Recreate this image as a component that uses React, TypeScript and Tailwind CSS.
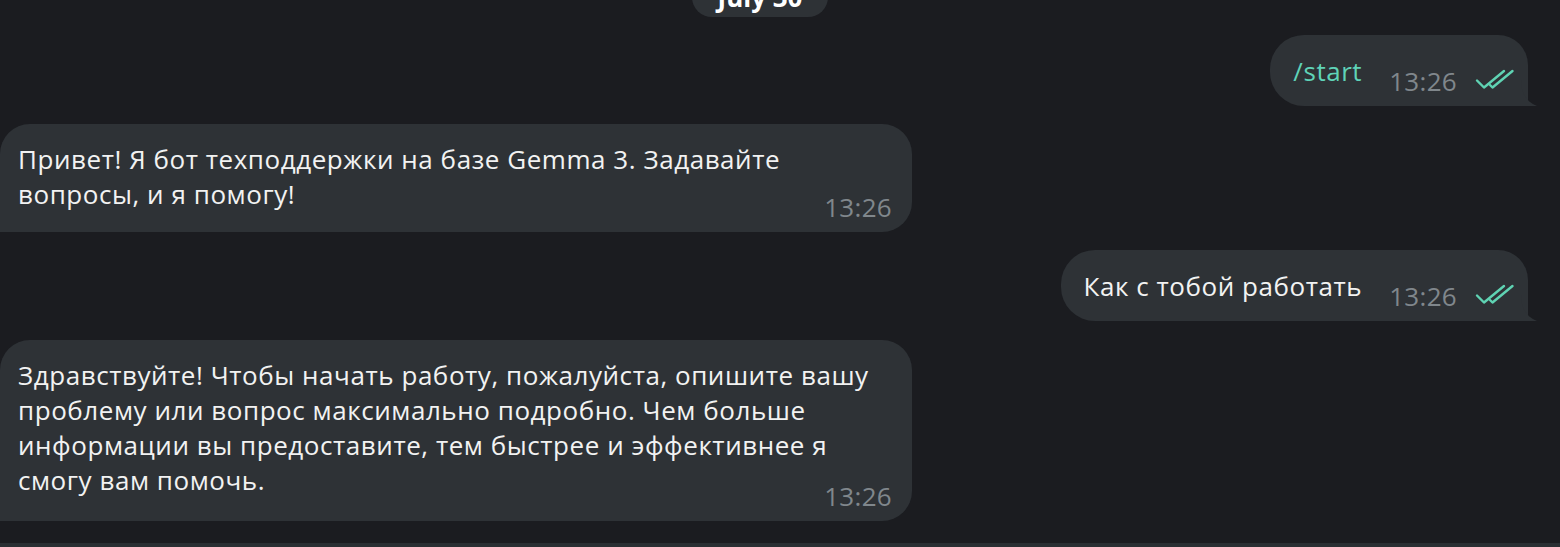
import React from "react";

const Checks = () => (
  <svg width="40" height="24" viewBox="0 0 40 24" fill="none" className="shrink-0">
    <path d="M2 13.5 L9 20.5 L29 4" stroke="#5fd3b3" strokeWidth="2.4" strokeLinecap="round" strokeLinejoin="round" />
    <path d="M15 18 L17.5 20.5 L37.5 4" stroke="#5fd3b3" strokeWidth="2.4" strokeLinecap="round" strokeLinejoin="round" />
  </svg>
);

const Tail = () => (
  <svg width="22" height="26" viewBox="0 0 22 26" className="absolute right-[-15px] bottom-0">
    <path d="M0 0 C0 14 6 22 16 26 L0 26 Z" fill="#2e3236" />
  </svg>
);

const OutMessage = ({ text, accent }: { text: string; accent?: boolean }) => (
  <div className="relative self-end mr-[32px] h-[71px] flex items-start pl-[23px] pr-[13px] bg-[#2e3236] rounded-tl-[34px] rounded-bl-[34px] rounded-tr-[30px]">
    <span className={accent ? "mt-[17px] text-[#5fd3b8] text-[26px] tracking-[0.55px]" : "mt-[17px] text-[#f2f2f2] text-[26px] tracking-[0.55px]"}>
      {text}
    </span>
    <span className="ml-[27px] mt-[27px] text-[26px] tracking-[0.3px] text-[#80878c]">13:26</span>
    <span className="ml-[18px] mt-[32px]">
      <Checks />
    </span>
    <Tail />
  </div>
);

const InMessage = ({ children, className }: { children: React.ReactNode; className: string }) => (
  <div className={"relative w-[912px] bg-[#2e3236] rounded-tl-[30px] rounded-tr-[30px] rounded-br-[30px] pl-[18px] pr-[24px] pt-[18px] " + className}>
    <p className="text-[26px] leading-[35px] tracking-[0.55px] text-[#f2f2f2]">{children}</p>
    <span className="absolute right-[20px] bottom-[12px] text-[26px] leading-none tracking-[0.3px] text-[#80878c]">13:26</span>
  </div>
);

export default function App() {
  return (
    <div className="w-[1560px] h-[547px] overflow-hidden bg-[#1b1c20] flex flex-col font-['Open_Sans',sans-serif]">
      <div className="self-start ml-[692px] -mt-[23px] w-[136px] h-[40px] rounded-full bg-[#2e3236] flex items-center justify-center text-[26px] font-bold text-white">
        July 30
      </div>
      <div className="mt-[18px] flex flex-col">
        <OutMessage text="/start" accent />
      </div>
      <InMessage className="mt-[18px] pb-[20px]">
        Привет! Я бот техподдержки на базе Gemma 3. Задавайте вопросы, и я помогу!
      </InMessage>
      <div className="mt-[18px] flex flex-col">
        <OutMessage text="Как с тобой работать" />
      </div>
      <InMessage className="mt-[19px] pb-[23px]">
        Здравствуйте! Чтобы начать работу, пожалуйста, опишите вашу проблему или вопрос максимально подробно. Чем больше информации вы предоставите, тем быстрее и эффективнее я смогу вам помочь.
      </InMessage>
      <div className="mt-auto h-[4px] bg-[#2a2f33]" />
    </div>
  );
}
